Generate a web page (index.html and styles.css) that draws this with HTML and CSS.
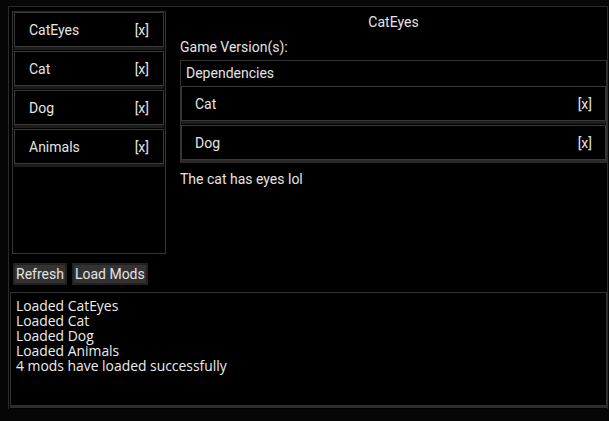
FILE: index.html
```html
<!DOCTYPE html>
<html>
<head>
<meta charset="utf-8">
<link rel="stylesheet" href="styles.css">
</head>
<body>
<div class="frame">
  <div class="top">
    <div class="left">
      <div class="list">
        <div class="item"><span>CatEyes</span><span>[x]</span></div>
        <div class="item"><span>Cat</span><span>[x]</span></div>
        <div class="item"><span>Dog</span><span>[x]</span></div>
        <div class="item"><span>Animals</span><span>[x]</span></div>
      </div>
      <div class="buttons">
        <button class="btn">Refresh</button>
        <button class="btn">Load Mods</button>
      </div>
    </div>
    <div class="detail">
      <div class="title">CatEyes</div>
      <div class="label">Game Version(s):</div>
      <div class="deps">
        <div class="deps-head">Dependencies</div>
        <div class="item dep"><span>Cat</span><span>[x]</span></div>
        <div class="item dep"><span>Dog</span><span>[x]</span></div>
      </div>
      <div class="desc">The cat has eyes lol</div>
    </div>
  </div>
  <div class="log">
    <div>Loaded CatEyes</div>
    <div>Loaded Cat</div>
    <div>Loaded Dog</div>
    <div>Loaded Animals</div>
    <div>4 mods have loaded successfully</div>
  </div>
</div>
</body>
</html>
```

FILE: styles.css
```css
html, body {
  margin: 0;
  padding: 0;
  background: #060606;
  color: #e4e4e4;
  font-family: Roboto, "Liberation Sans", sans-serif;
  font-size: 14px;
}
.frame {
  margin: 6px 0 0 8px;
  width: 600px;
  height: 403px;
  box-sizing: border-box;
  border: 1px solid #2b2b2b;
  border-bottom: none;
  background: #000;
}
.top {
  display: flex;
  padding: 4px 0 0 3px;
  height: 285px;
  box-sizing: border-box;
}
.left {
  width: 154px;
  flex: none;
}
.list {
  height: 243px;
  box-sizing: border-box;
  border: 1px solid #363636;
  border-top-color: #2a2a2a;
  padding: 0 1px;
}
.item {
  display: flex;
  justify-content: space-between;
  align-items: center;
  height: 35px;
  box-sizing: border-box;
  border: 1px solid #383838;
  padding: 0 14px;
  margin-bottom: 4px;
  box-shadow: 0 3px 0 #1c1c1c;
  background: #000;
}
.buttons {
  display: flex;
  gap: 5px;
  margin: 9px 0 0 1px;
}
.btn {
  font-family: Roboto, "Liberation Sans", sans-serif;
  font-size: 14px;
  color: #e4e4e4;
  background: #333;
  border: 2px solid #222;
  height: 22px;
  padding: 0 1px;
  margin: 0;
  line-height: 18px;
}
.detail {
  flex: 1;
  margin-left: 3px;
  padding: 2px 0 0 11px;
  display: flex;
  flex-direction: column;
}
.title {
  text-align: center;
  line-height: 18px;
  height: 18px;
}
.label {
  margin-top: 8px;
  line-height: 16px;
}
.deps {
  margin-top: 5px;
  border: 1px solid #333;
  border-bottom: 3px solid #2a2a2a;
  padding-bottom: 0;
}
.deps-head {
  height: 25px;
  line-height: 25px;
  padding-left: 5px;
  box-sizing: border-box;
}
.dep {
  padding: 0 13px;
}
.dep:last-child {
  margin-bottom: 0;
  box-shadow: none;
}
.desc {
  margin-top: 8px;
  line-height: 16px;
}
.log {
  margin: 0 0 0 1px;
  height: 116px;
  box-sizing: border-box;
  border: 1px solid #333;
  border-bottom: 3px solid #2c2c2c;
  padding: 5px 5px 0 5px;
  font-family: "Open Sans", "Noto Sans", sans-serif;
  font-size: 13.9px;
  line-height: 15px;
  color: #ececec;
}
```
